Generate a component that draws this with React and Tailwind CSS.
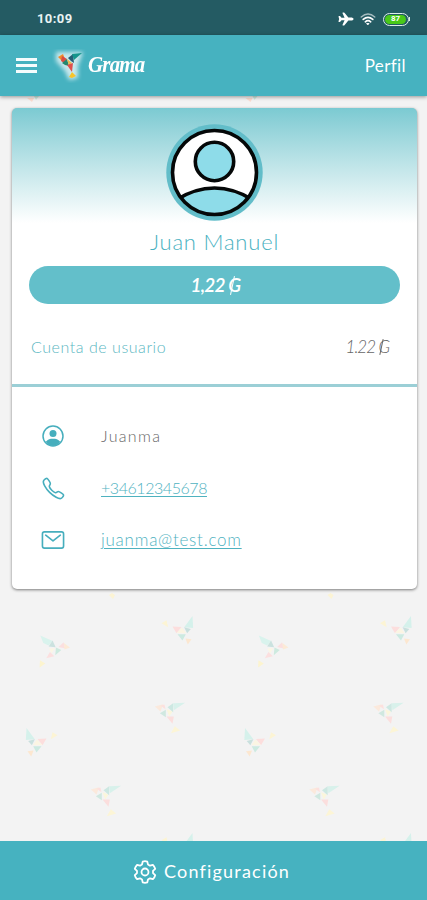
import React from "react";
import { IoAirplane, IoCallOutline, IoMailOutline } from "react-icons/io5";

const tiltedBird = [
  ["465,410 490,403 482,425", "#fbe9dc"],
  ["480,430 498,420 498,442", "#d0e8e0"],
  ["500,418 518,425 508,440", "#fbf6dc"],
  ["503,412 520,400 520,427", "#cde8e2"],
  ["520,400 556,399 522,421", "#d8f1eb"],
  ["482,408 494,404 497,418", "#fce0de"],
  ["500,440 522,440 518,462", "#fbdedd"],
  ["513,490 525,469 541,482", "#fcf5d6"],
];

const divingBird = [
  ["121,197 158,213 146,227 130,219", "#d9f3ed"],
  ["158,212 167,232 146,230", "#cbe2df"],
  ["147,236 165,234 155,251", "#fbf6e6"],
  ["168,233 184,240 166,256", "#cdeadf"],
  ["176,231 191,217 196,236", "#fbdfdf"],
  ["192,219 210,233 194,239", "#fcead6"],
  ["139,265 150,246 163,259", "#fcdfdf"],
  ["120,271 136,281 119,293", "#fcf4cf"],
];

const flyingBird = [
  ["578,138 580,174 553,172", "#d5f1eb"],
  ["553,172 573,177 562,190", "#c9e0de"],
  ["518,170 545,171 530,190", "#fcdedd"],
  ["530,189 547,173 559,190", "#fbf5e3"],
  ["533,193 558,193 548,212", "#cdeae1"],
  ["557,206 575,208 564,224", "#fce7d0"],
  ["485,160 500,151 505,172", "#fcf4d4"],
];

const flock = [
  { shape: tiltedBird, move: "translate(0 570) scale(.333)" },
  { shape: tiltedBird, move: "translate(-64 653) scale(.333)" },
  { shape: divingBird, move: "translate(0 570) scale(.333)" },
  { shape: flyingBird, move: "translate(0 570) scale(.333)" },
  { shape: flyingBird, move: "matrix(-.333 0 0 .333 219 682)" },
  { shape: flyingBird, move: "translate(0 787) scale(.333)" },
];

const Backdrop = () => (
  <svg
    className="absolute inset-0 h-full w-full"
    viewBox="0 0 427 900"
    aria-hidden="true"
  >
    {[0, 218.5].map((x) => (
      <g key={x} transform={`translate(${x} 0)`}>
        {flock.map((bird, i) => (
          <g key={i} transform={bird.move}>
            {bird.shape.map(([points, fill]) => (
              <polygon key={points} points={points} fill={fill} />
            ))}
          </g>
        ))}
        <path d="m109 595 3-2 3 2-2 4z" fill="#fcf4d4" />
        <path d="m27 98 7 0-2 4z" fill="#fbdcd0" />
        <path d="m34 96 5 0-3 4z" fill="#cdeae1" />
      </g>
    ))}
  </svg>
);

const StatusBar = () => (
  <div className="flex h-[35px] items-center justify-between bg-[#245b63] pt-[3px] pr-[17px] pl-[37px] text-white">
    <span className="font-[Roboto] text-[13px] leading-4 font-bold tracking-[0.4px] text-[#e9f3f4]">
      10:09
    </span>
    <div className="flex items-center gap-[6px]">
      <IoAirplane size={16} />
      <svg
        width="16"
        height="14"
        viewBox="0 0 16 14"
        fill="none"
        stroke="currentColor"
        strokeLinecap="round"
      >
        <path d="M1.2 5Q8-1 14.8 5" strokeWidth="1.3" opacity=".6" />
        <path d="M3.2 7.4Q8 3.2 12.8 7.4" strokeWidth="1.7" />
        <path d="M5.3 9.8Q8 7.5 10.7 9.8" strokeWidth="1.7" />
        <path d="M7 11.6h2L8 12.6z" fill="currentColor" strokeWidth="1" />
      </svg>
      <div className="ml-px flex items-center">
        <div className="flex h-[13px] w-[26px] items-center rounded-full border-[1.5px] border-[#dceee8] p-px">
          <div className="flex h-full w-[21px] items-center justify-center rounded-full bg-[#48c918] font-[Roboto] text-[8px] leading-none font-bold">
            87
          </div>
        </div>
        <div className="h-1 w-px bg-[#dceee8]" />
      </div>
    </div>
  </div>
);

const Logo = () => (
  <svg width="36" height="34" viewBox="0 0 36 34">
    <defs>
      <filter id="glow" x="-30%" y="-30%" width="160%" height="160%">
        <feGaussianBlur stdDeviation="2.2" />
      </filter>
    </defs>
    <path
      d="M4 3h27l-5 14 0 12-9 2-4-9-9-10z"
      fill="#fff"
      opacity=".7"
      filter="url(#glow)"
    />
    <path d="m6 8 5-3 2 5-4 1z" fill="#ef8b2c" />
    <path d="m10 7 5 3-3 4-3-2z" fill="#d94c43" />
    <path d="m10 14 5-4 2 7-4-1z" fill="#23876f" />
    <path d="m15 10 5 4-3 3z" fill="#eab94e" />
    <path d="m16 9 5-4 1 9-3-2z" fill="#255f76" />
    <path d="m20 5 10-1-8 7z" fill="#14958c" />
    <path d="m15 16 6-2-1 9z" fill="#df504c" />
    <path d="m17 28 3-5 4 4-4 2z" fill="#f8c52b" />
  </svg>
);

const Header = () => (
  <header className="flex h-[61px] items-center bg-[#46b2c0] pr-[21px] pl-[16px] text-white shadow-[0_1px_4px_rgba(0,0,0,0.4)]">
    <button className="flex w-[21px] flex-col gap-[3.5px]">
      <span className="h-[2.5px] w-full bg-[#f5fcfd]" />
      <span className="h-[2.5px] w-full bg-[#f5fcfd]" />
      <span className="h-[2.5px] w-full bg-[#f5fcfd]" />
    </button>
    <div className="ml-[15px] flex items-center">
      <Logo />
      <span className="-mt-1 w-[57px] origin-left scale-x-[0.87] font-['Liberation_Serif'] text-[24px] leading-7 font-bold tracking-[-0.9px] italic">
        Grama
      </span>
    </div>
    <span className="ml-auto text-[17px] tracking-[0.4px]">Perfil</span>
  </header>
);

const Avatar = () => (
  <svg width="97" height="97" viewBox="0 0 97 97" className="shrink-0">
    <defs>
      <clipPath id="face">
        <circle cx="48.5" cy="48.5" r="42" />
      </clipPath>
    </defs>
    <circle cx="48.5" cy="48.5" r="48.2" fill="#62bdc9" />
    <circle cx="48.5" cy="48.5" r="42" fill="#fff" />
    <g fill="#8edce9" stroke="#050808" strokeWidth="3.6">
      <circle cx="48.5" cy="37.5" r="19.2" />
      <path
        d="M10 76Q29 64 48.5 64T87 76V100H10z"
        clipPath="url(#face)"
      />
    </g>
    <circle
      cx="48.5"
      cy="48.5"
      r="42"
      fill="none"
      stroke="#050808"
      strokeWidth="3.6"
    />
  </svg>
);

// currency sign: a G crossed by a slanted bar
const Coin = () => (
  <span className="relative inline-block">
    G
    <span className="absolute top-[18%] left-[28%] h-[66%] w-px rotate-12 bg-current" />
  </span>
);

const UserIcon = () => (
  <svg width="24" height="24" viewBox="0 0 24 24" fill="none">
    <circle cx="12" cy="12" r="10" stroke="#46aebd" strokeWidth="1.5" />
    <circle cx="12" cy="9.5" r="3.5" fill="#46aebd" />
    <path
      d="M4.8 17.8c2-2.6 4.3-3.1 7.2-3.1s5.2.5 7.2 3.1A9.5 9.5 0 0 1 12 22a9.5 9.5 0 0 1-7.2-4.2z"
      fill="#46aebd"
    />
  </svg>
);

const GearIcon = () => (
  <svg
    width="24"
    height="24"
    viewBox="0 0 24 24"
    fill="none"
    stroke="currentColor"
    strokeWidth="1.8"
    strokeLinejoin="round"
  >
    <path d="M9.7 1.6Q12 .8 14.3 1.6L15 4.5l2 1.2 2.9-.9q1.7 1.7 2.3 4L20 10.9v2.2l2.2 2.1q-.6 2.3-2.3 4l-2.9-.9-2 1.2-.7 2.9q-2.3.8-4.6 0L9 19.5l-2-1.2-2.9.9q-1.7-1.7-2.3-4L4 13.1v-2.2L1.8 8.8q.6-2.3 2.3-4l2.9.9 2-1.2z" />
    <circle cx="12" cy="12" r="3.5" />
  </svg>
);

const contacts = [
  {
    icon: <UserIcon />,
    text: "Juanma",
    style: "text-[#666] text-[16px] tracking-[1.3px]",
  },
  {
    icon: <IoCallOutline size={25} className="-mr-px text-[#46aebd]" />,
    text: "+34612345678",
    style: "text-[#4fb2bf] text-[16px] tracking-[-0.45px] underline",
  },
  {
    icon: <IoMailOutline size={26} className="-mx-px text-[#46aebd]" />,
    text: "juanma@test.com",
    style: "text-[#4fb2bf] text-[17px] tracking-[0.75px] underline",
  },
];

const ProfileCard = () => (
  <section className="mr-[10px] ml-[12px] mt-3 h-[481px] rounded-[5px] bg-white bg-linear-to-b from-[#7bcad2] to-white to-[115px] shadow-[0_1px_3px_rgba(0,0,0,0.5)]">
    <div className="flex flex-col items-center px-[17px] pt-[16px]">
      <Avatar />
      <h1 className="mt-[7px] text-[22px] leading-7 font-light tracking-[0.8px] text-[#49b1bf]">
        Juan Manuel
      </h1>
      <div className="mt-[10px] flex h-[38px] w-full items-center justify-center rounded-full bg-[#63bfca] text-[19px] font-semibold tracking-[-0.8px] text-white italic">
        <span className="ml-[2px]">
          1,22 <Coin />
        </span>
      </div>
    </div>
    <div className="mt-[19px] flex h-[64px] items-start justify-between border-b-[3px] border-[#9bcfd6] pt-[12px] pr-[28px] pl-[19px]">
      <span className="text-[16px] leading-6 font-light tracking-[0.55px] text-[#5bb7c2]">
        Cuenta de usuario
      </span>
      <span className="text-[17px] leading-6 font-light tracking-[-1px] text-[#666] italic">
        1.22 <Coin />
      </span>
    </div>
    <ul className="pt-[23px]">
      {contacts.map((item) => (
        <li key={item.text} className="flex h-[52px] items-center pl-[29px]">
          {item.icon}
          <span className={`ml-9 font-light underline-offset-2 ${item.style}`}>
            {item.text}
          </span>
        </li>
      ))}
    </ul>
  </section>
);

const App = () => {
  return (
    <div className="relative h-[900px] w-full overflow-hidden bg-[#f3f3f3] font-['Lato',sans-serif]">
      <Backdrop />
      <div className="relative flex h-full flex-col">
        <StatusBar />
        <Header />
        <ProfileCard />
        <footer className="mt-auto flex h-[59px] items-center justify-center gap-[7px] bg-[#46b2c0] pt-[3px] pr-[4px] text-white">
          <GearIcon />
          <span className="-mt-[2px] text-[18px] tracking-[1.2px]">
            Configuración
          </span>
        </footer>
      </div>
    </div>
  );
};

export default App;
